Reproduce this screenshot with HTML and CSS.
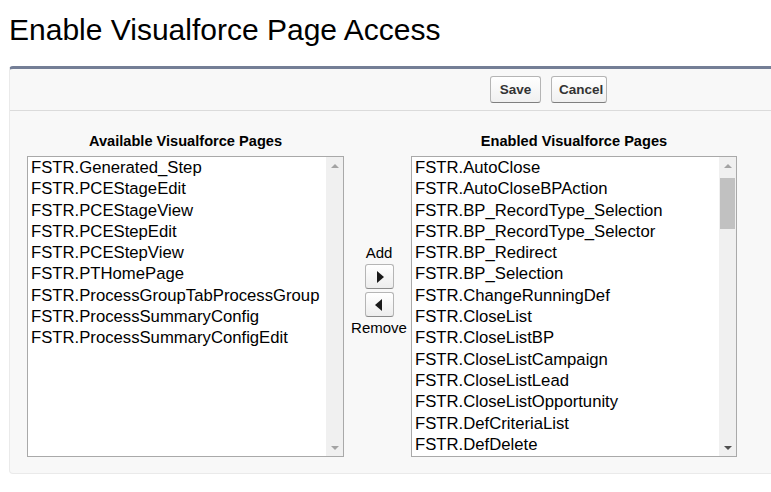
FILE: index.html
```html
<!DOCTYPE html>
<html>
<head>
<meta charset="utf-8">
<link rel="stylesheet" href="styles.css">
</head>
<body>
<h1 class="title">Enable Visualforce Page Access</h1>
<div class="panel">
  <div class="btnbar">
    <button class="btn">Save</button>
    <button class="btn">Cancel</button>
  </div>
  <div class="body">
    <div class="col col-left">
      <div class="colhead">Available Visualforce Pages</div>
      <div class="listbox">
        <div class="items">
          <div class="item">FSTR.Generated_Step</div>
          <div class="item">FSTR.PCEStageEdit</div>
          <div class="item">FSTR.PCEStageView</div>
          <div class="item">FSTR.PCEStepEdit</div>
          <div class="item">FSTR.PCEStepView</div>
          <div class="item">FSTR.PTHomePage</div>
          <div class="item">FSTR.ProcessGroupTabProcessGroup</div>
          <div class="item">FSTR.ProcessSummaryConfig</div>
          <div class="item">FSTR.ProcessSummaryConfigEdit</div>
        </div>
        <div class="sbar">
          <span class="arr up light"></span>
          <span class="track"></span>
          <span class="arr down light"></span>
        </div>
      </div>
    </div>
    <div class="mid">
      <div class="midlabel">Add</div>
      <button class="arrbtn"><span class="tri right"></span></button>
      <button class="arrbtn"><span class="tri left"></span></button>
      <div class="midlabel">Remove</div>
    </div>
    <div class="col col-right">
      <div class="colhead">Enabled Visualforce Pages</div>
      <div class="listbox">
        <div class="items">
          <div class="item">FSTR.AutoClose</div>
          <div class="item">FSTR.AutoCloseBPAction</div>
          <div class="item">FSTR.BP_RecordType_Selection</div>
          <div class="item">FSTR.BP_RecordType_Selector</div>
          <div class="item">FSTR.BP_Redirect</div>
          <div class="item">FSTR.BP_Selection</div>
          <div class="item">FSTR.ChangeRunningDef</div>
          <div class="item">FSTR.CloseList</div>
          <div class="item">FSTR.CloseListBP</div>
          <div class="item">FSTR.CloseListCampaign</div>
          <div class="item">FSTR.CloseListLead</div>
          <div class="item">FSTR.CloseListOpportunity</div>
          <div class="item">FSTR.DefCriteriaList</div>
          <div class="item">FSTR.DefDelete</div>
        </div>
        <div class="sbar">
          <span class="arr up"></span>
          <span class="track"><span class="thumb"></span></span>
          <span class="arr down dark"></span>
        </div>
      </div>
    </div>
  </div>
</div>
</body>
</html>
```

FILE: styles.css
```css
html, body {
  margin: 0;
  padding: 0;
  background: #ffffff;
  font-family: "Liberation Sans", Arial, sans-serif;
  color: #000;
  overflow: hidden;
}

.title {
  margin: 0;
  padding: 13px 0 0 9px;
  height: 66px;
  box-sizing: border-box;
  font-size: 30px;
  font-weight: normal;
  line-height: 34px;
  color: #000;
}

.panel {
  margin-left: 9px;
  width: 775px;
  box-sizing: border-box;
  background: #f8f8f8;
  border-top: 3px solid #747e96;
  border-left: 1px solid #eaeaea;
  border-bottom: 1px solid #eaeaea;
  border-radius: 4px;
  height: 408px;
}

.btnbar {
  height: 42px;
  box-sizing: border-box;
  border-bottom: 1px solid #dbdbdb;
  padding: 7px 0 0 480px;
  display: flex;
  gap: 10px;
  align-items: flex-start;
}

.btn {
  height: 27px;
  padding: 0 7px;
  border: 1px solid #b5b5b5;
  border-bottom-color: #7f7f7f;
  border-radius: 3px;
  background: linear-gradient(#ffffff, #f0f0f0);
  font-family: "Liberation Sans", Arial, sans-serif;
  font-size: 13.5px;
  font-weight: bold;
  color: #333;
  margin: 0;
}
.btn:first-child { width: 51px; }
.btn:last-child { width: 56px; }

.body {
  display: flex;
  align-items: flex-start;
  padding: 21px 0 0 17px;
}

.col {
  display: flex;
  flex-direction: column;
}
.col-left { width: 317px; }
.col-right { width: 326px; }

.colhead {
  text-align: center;
  font-size: 14.6px;
  font-weight: bold;
  line-height: 18px;
  height: 24px;
  color: #000;
}

.listbox {
  height: 301px;
  box-sizing: border-box;
  border: 1px solid #a9a9a9;
  background: #fff;
  display: flex;
  overflow: hidden;
}

.items {
  flex: 1;
  padding: 0 0 0 3px;
  overflow: hidden;
}

.item {
  font-size: 16.7px;
  line-height: 21.3px;
  height: 21.3px;
  white-space: nowrap;
  color: #000;
}

.sbar {
  width: 17px;
  background: #f0f0f0;
  display: flex;
  flex-direction: column;
}

.arr {
  height: 17px;
  display: flex;
  align-items: center;
  justify-content: center;
}
.arr::before {
  content: "";
  width: 0;
  height: 0;
  border-left: 4px solid transparent;
  border-right: 4px solid transparent;
}
.arr.up::before { border-bottom: 4px solid #a3a3a3; }
.arr.down::before { border-top: 4px solid #a3a3a3; }
.arr.down.dark::before { border-top-color: #505050; }

.track {
  flex: 1;
  position: relative;
}
.thumb {
  display: block;
  margin: 4px 1px 0 1px;
  height: 51px;
  background: #c1c1c1;
}

.mid {
  width: 67px;
  box-sizing: border-box;
  padding: 112px 0 0 3px;
  display: flex;
  flex-direction: column;
  align-items: center;
}

.midlabel {
  font-size: 15px;
  line-height: 17px;
  color: #000;
}

.arrbtn {
  width: 29px;
  height: 25px;
  margin: 3px 0 0 0;
  padding: 0;
  border: 1px solid #b5b5b5;
  border-bottom-color: #8a8a8a;
  border-radius: 3px;
  background: linear-gradient(#ffffff, #ededed);
  display: flex;
  align-items: center;
  justify-content: center;
}
.arrbtn + .arrbtn { margin-bottom: 2px; }

.tri {
  width: 0;
  height: 0;
  border-top: 6px solid transparent;
  border-bottom: 6px solid transparent;
}
.tri.right { border-left: 7px solid #1a1a1a; margin-left: 2px; }
.tri.left { border-right: 7px solid #1a1a1a; margin-right: 2px; }
```
